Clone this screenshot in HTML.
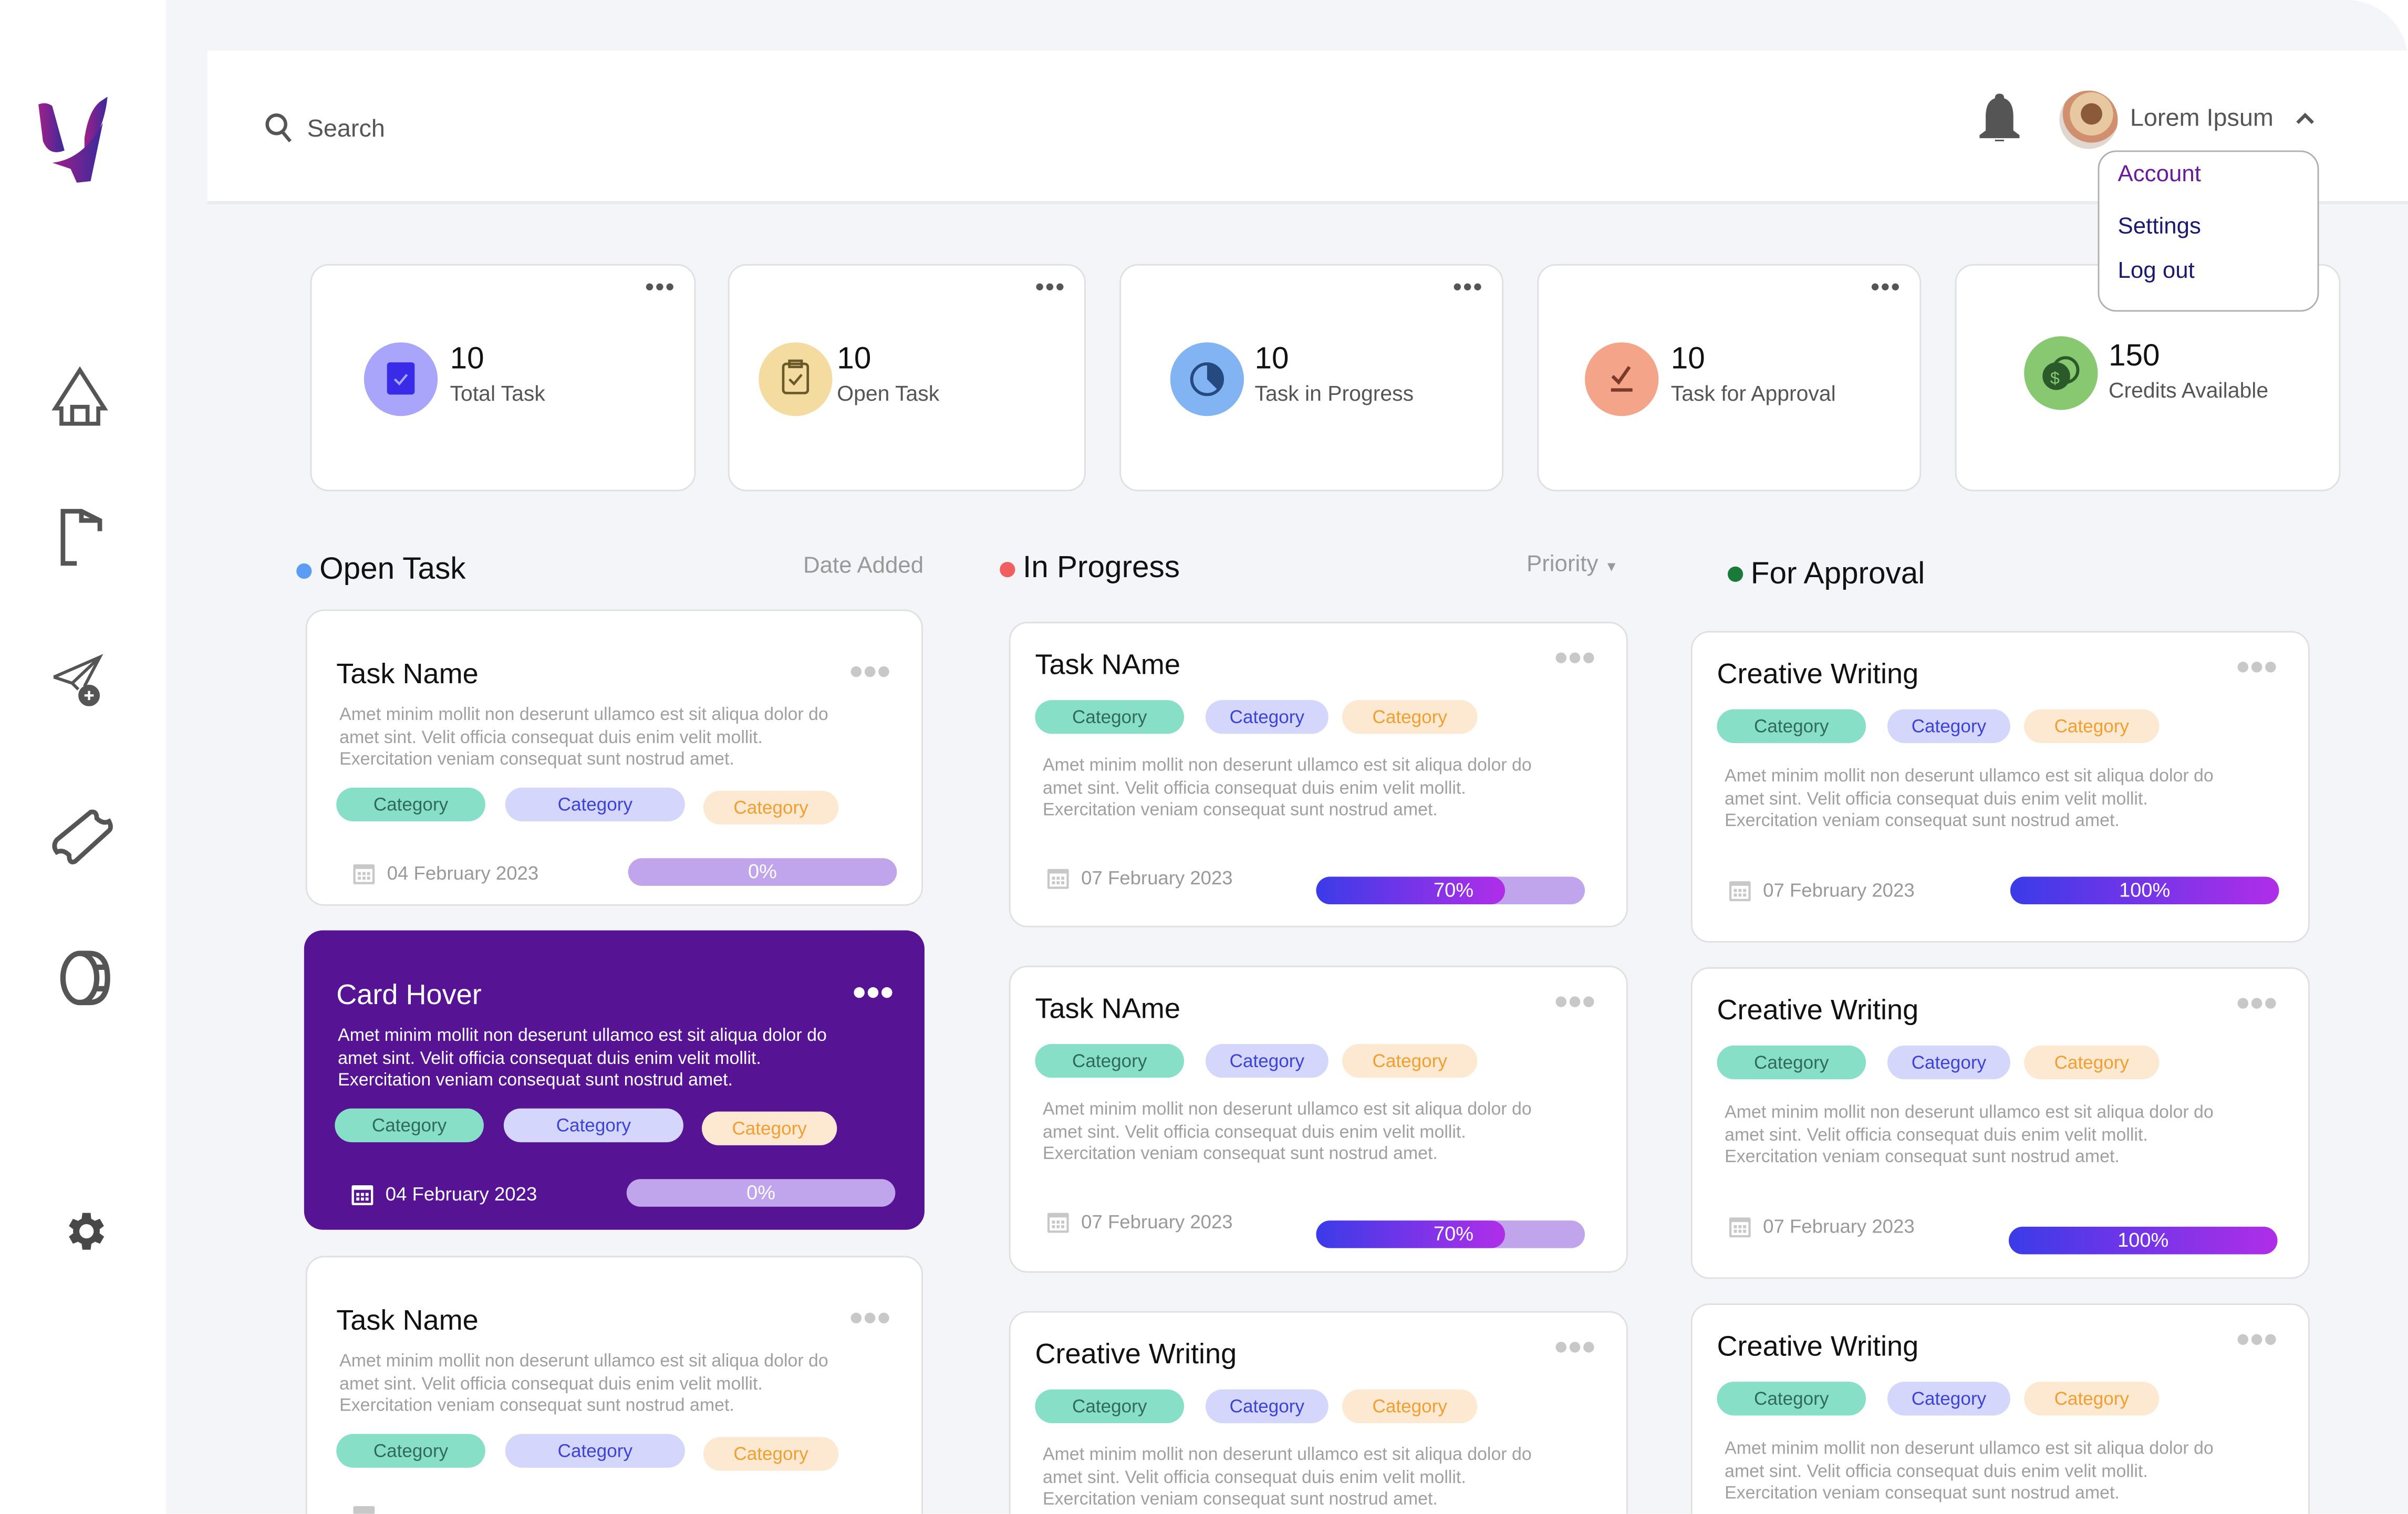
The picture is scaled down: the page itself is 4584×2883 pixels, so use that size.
<!DOCTYPE html>
<html><head><meta charset="utf-8"><style>
html,body{margin:0;padding:0;width:4584px;height:2883px;overflow:hidden;background:#fff;font-family:"Liberation Sans",sans-serif}
#s{position:absolute;left:0;top:0;width:1568px;height:986px;overflow:hidden;transform:scale(2.9235);transform-origin:0 0}
.a{position:absolute}
.main{left:108px;top:0;width:1460px;height:986px;background:#f4f5f9;border-top-right-radius:40px}
.card{position:absolute;background:#fff;border:1px solid #e0e0e0;border-radius:12px;box-sizing:border-box}
.stat .dots{position:absolute;right:12px;top:6px;color:#555;font-size:16px;letter-spacing:1px;font-weight:bold}
.stat .ic{position:absolute;left:34px;top:50px;width:48px;height:48px;border-radius:50%}
.stat .n{position:absolute;left:90px;top:50px;font-size:20px;color:#111}
.stat .l{position:absolute;left:90px;top:75px;font-size:14px;color:#555}
.t{position:absolute;font-size:18.5px;color:#111}
.d{position:absolute;font-size:11.6px;line-height:14.5px;color:#a0a0a0;white-space:nowrap}
.dt{position:absolute;font-size:12.5px;color:#999}
.tag{position:absolute;height:22px;border-radius:11px;font-size:12px;line-height:22px;text-align:center}
.g{background:#88dfc8;color:#2f6b58}.b{background:#d4d6fb;color:#3c43d6}.o{background:#fde8d2;color:#f0a030}
.bar{position:absolute;height:18px;border-radius:9px;background:#c0a4ec;overflow:hidden;color:#fff;font-size:13px;line-height:18px}
.fill{position:absolute;left:0;top:0;bottom:0;border-radius:9px;background:linear-gradient(90deg,#3b3be8,#b02ee8)}
.mdots{position:absolute;right:16px;top:22px;width:30px;height:8px;white-space:nowrap}
.mdots i{display:inline-block;width:7px;height:7px;border-radius:50%;background:#c8c8c8;margin-right:2px;vertical-align:top}
.cal{position:absolute;width:14px;height:15px}
.sh{position:absolute;font-size:20px;color:#111}
.dot{position:absolute;width:10px;height:10px;border-radius:50%}
</style></head><body><div id="s">
<div class="a main"></div>
<svg class="a" style="left:22px;top:62px" width="56" height="60" viewBox="0 0 56 60"><defs><linearGradient id="lg" x1="0" x2="1"><stop offset="0" stop-color="#a0208a"/><stop offset="1" stop-color="#3a2a9a"/></linearGradient></defs>
<path d="M3 6 Q8 4 12 7 L20 36 Q10 40 6 30 Z" fill="url(#lg)"/><path d="M33 28 Q36 8 45 3 L48 1 Q46 22 33 40 Z" fill="url(#lg)"/><path d="M12 44 Q32 42 45 18 L37 56 L28 57 L24 48 Z" fill="url(#lg)"/></svg>
<svg class="a" style="left:33px;top:238px" width="38" height="40" viewBox="0 0 38 40" fill="none" stroke="#555" stroke-width="2.6"><path d="M19 3 L3 28 L7 28 L7 38 L31 38 L31 28 L35 28 Z"/><path d="M14 38 V27 H24 V38"/></svg>
<svg class="a" style="left:38px;top:330px" width="30" height="40" viewBox="0 0 30 40" fill="none" stroke="#555" stroke-width="3"><path d="M12 37 H3 V3 H15 L27 9 V16"/><path d="M15 3 V9 H27"/></svg>
<svg class="a" style="left:33px;top:425px" width="36" height="36" viewBox="0 0 36 36" fill="none" stroke="#555" stroke-width="2"><path d="M2 16 L32 3 L22 22"/><path d="M2 16 L14 20 L32 3 M14 20 L18 24"/><circle cx="25" cy="28" r="6" fill="#555"/><path d="M25 25 V31 M22 28 H28" stroke="#fff" stroke-width="1.5"/></svg>
<svg class="a" style="left:33px;top:525px" width="42" height="40" viewBox="0 0 42 40" fill="none" stroke="#555" stroke-width="3"><path d="M4 22 L26 4 Q30 3 30 8 Q34 12 38 10 Q40 14 38 16 L16 36 Q12 38 12 32 Q8 28 4 30 Q1 26 4 22 Z"/></svg>
<svg class="a" style="left:38px;top:618px" width="36" height="38" viewBox="0 0 36 38" fill="none" stroke="#555" stroke-width="3.5"><ellipse cx="14" cy="19" rx="11" ry="16"/><path d="M14 3 H20 Q32 3 32 19 Q32 35 20 35 H14"/><path d="M24 12 H31 M24 26 H31"/></svg>
<svg class="a" style="left:39px;top:786px" width="32" height="32" viewBox="0 0 24 24" fill="#484848"><path d="M19.4 13a7.5 7.5 0 000-2l2.1-1.6-2-3.5-2.5 1a7 7 0 00-1.7-1L15 3h-4l-.4 2.9a7 7 0 00-1.7 1l-2.5-1-2 3.5L6.5 11a7.5 7.5 0 000 2l-2.1 1.6 2 3.5 2.5-1a7 7 0 001.7 1L11 21h4l.4-2.9a7 7 0 001.7-1l2.5 1 2-3.5zM13 15.5A3.5 3.5 0 1113 8.5a3.5 3.5 0 010 7z"/></svg>
<div class="a" style="left:135px;top:33px;width:1433px;height:98px;background:#fff;border-bottom:2px solid #ebebeb"></div>
<svg class="a" style="left:172px;top:73px" width="20" height="22" viewBox="0 0 20 22" fill="none" stroke="#555" stroke-width="2.2"><circle cx="8" cy="8" r="6"/><path d="M12 13 L17 19"/></svg>
<div class="a" style="left:200px;top:76px;font-size:16px;color:#555">Search</div>
<svg class="a" style="left:1288px;top:60px" width="28" height="32" viewBox="0 0 28 32" fill="#555"><path d="M14 1 Q17 1 17 4 Q23 6 23 16 V25 L27 28 V30 H1 V28 L5 25 V16 Q5 6 11 4 Q11 1 14 1Z"/><path d="M11 31 H17 Q17 34 14 34 Q11 34 11 31Z"/></svg>
<div class="a" style="left:1341px;top:59px;width:38px;height:38px;border-radius:50%;background:radial-gradient(circle at 55% 40%,#8a5a3a 0 22%,#e8c8a0 23% 45%,#d09070 46% 60%,#e0d8d0 61%)"></div>
<div class="a" style="left:1387px;top:69px;font-size:16px;color:#555">Lorem Ipsum</div>
<svg class="a" style="left:1494px;top:71px" width="14" height="12" viewBox="0 0 14 12" fill="none" stroke="#555" stroke-width="2.2"><path d="M2 9 L7 4 L12 9"/></svg>
<div class="card stat" style="left:202px;top:172px;width:251px;height:148px"><div class="dots">•••</div><div class="ic" style="background:#a9a5fb"><div class="a" style="left:15px;top:13px;width:18px;height:21px;background:#3a2be8;border-radius:2px"></div><svg class="a" style="left:19px;top:20px" width="10" height="8"><path d="M1 4 L4 7 L9 1" stroke="#a9a5fb" fill="none" stroke-width="1.5"/></svg></div><div class="n">10</div><div class="l">Total Task</div></div>
<div class="card stat" style="left:474px;top:172px;width:233px;height:148px"><div class="dots">•••</div><div class="ic" style="left:19px;background:#f4dca0"><svg class="a" style="left:14px;top:11px" width="20" height="24" viewBox="0 0 20 24" fill="none" stroke="#6a5a2a" stroke-width="1.6"><rect x="2" y="3" width="16" height="19" rx="2"/><rect x="6" y="1" width="8" height="4"/><path d="M6 13 L9 16 L14 10"/></svg></div><div class="n" style="left:70px">10</div><div class="l" style="left:70px">Open Task</div></div>
<div class="card stat" style="left:729px;top:172px;width:250px;height:148px"><div class="dots">•••</div><div class="ic" style="left:32px;background:#82b4f4"><svg class="a" style="left:12px;top:12px" width="24" height="24" viewBox="0 0 24 24"><circle cx="12" cy="12" r="10" fill="none" stroke="#244a80" stroke-width="2"/><path d="M12 2 A10 10 0 0 1 19 19 L12 12Z" fill="#244a80"/></svg></div><div class="n" style="left:87px">10</div><div class="l" style="left:87px">Task in Progress</div></div>
<div class="card stat" style="left:1001px;top:172px;width:250px;height:148px"><div class="dots">•••</div><div class="ic" style="left:30px;background:#f4a488"><svg class="a" style="left:15px;top:14px" width="18" height="20" viewBox="0 0 18 20" fill="none" stroke="#7a3a2a" stroke-width="2.2"><path d="M3 8 L7 12 L14 2"/><path d="M2 17 H16"/></svg></div><div class="n" style="left:86px">10</div><div class="l" style="left:86px">Task for Approval</div></div>
<div class="card stat" style="left:1273px;top:172px;width:251px;height:148px"><div class="dots">•••</div><div class="ic" style="left:44px;top:46px;background:#88c870"><svg class="a" style="left:10px;top:12px" width="28" height="24" viewBox="0 0 28 24" fill="none" stroke="#2a5a2a" stroke-width="2"><circle cx="11" cy="14" r="8" fill="#2a5a2a"/><circle cx="17" cy="10" r="8"/><text x="7" y="19" font-size="11" fill="#88c870" stroke="none" font-family="Liberation Sans">$</text></svg></div><div class="n" style="left:99px;top:48px">150</div><div class="l" style="left:99px;top:73px">Credits Available</div></div>
<div class="a" style="left:1366px;top:98px;width:144px;height:105px;background:#fff;border:1.5px solid #b0b0b0;border-radius:12px;box-sizing:border-box"></div>
<div class="a" style="left:1379px;top:105px;font-size:15px;color:#6a1b9a">Account</div>
<div class="a" style="left:1379px;top:139px;font-size:15px;color:#1a1a6e">Settings</div>
<div class="a" style="left:1379px;top:168px;font-size:15px;color:#1a1a6e">Log out</div>
<div class="dot" style="left:193px;top:367px;background:#5b9cf5"></div><div class="sh" style="left:208px;top:360px">Open Task</div>
<div class="a" style="left:523px;top:360px;font-size:15px;color:#999">Date Added</div>
<div class="dot" style="left:651px;top:366px;background:#f06060"></div><div class="sh" style="left:666px;top:359px">In Progress</div>
<div class="a" style="left:994px;top:359px;font-size:15px;color:#999">Priority <span style="font-size:9px">▼</span></div>
<div class="dot" style="left:1125px;top:369px;background:#1a7a3a"></div><div class="sh" style="left:1140px;top:363px">For Approval</div>

<div class="card" style="left:199px;top:397px;width:402px;height:193px">
<div class="t" style="left:19px;top:30px">Task Name</div><div class="mdots" style="top:36px"><i></i><i></i><i></i></div>
<div class="d" style="left:21px;top:61px">Amet minim mollit non deserunt ullamco est sit aliqua dolor do<br>amet sint. Velit officia consequat duis enim velit mollit.<br>Exercitation veniam consequat sunt nostrud amet.</div>
<div class="tag g" style="left:19px;top:115px;width:97px">Category</div><div class="tag b" style="left:129px;top:115px;width:117px">Category</div><div class="tag o" style="left:258px;top:117px;width:88px">Category</div>
<svg class="cal" style="left:30px;top:163px" viewBox="0 0 14 15"><rect x="0" y="2" width="14" height="13" rx="1" fill="#c8c8c8"/><rect x="1.5" y="5" width="11" height="8.5" fill="#fff"/><g fill="#c8c8c8"><rect x="3" y="7" width="2" height="2"/><rect x="6" y="7" width="2" height="2"/><rect x="9" y="7" width="2" height="2"/><rect x="3" y="10" width="2" height="2"/><rect x="6" y="10" width="2" height="2"/><rect x="9" y="10" width="2" height="2"/></g></svg>
<div class="dt" style="left:52px;top:164px">04 February 2023</div>
<div class="bar" style="left:209px;top:161px;width:175px"><div class="a" style="left:0;right:0;text-align:center">0%</div></div></div>

<div class="card" style="left:198px;top:606px;width:404px;height:195px;background:#561494;border:none">
<div class="t" style="left:21px;top:31px;color:#fff">Card Hover</div><div class="mdots" style="top:37px"><i style="background:#fff"></i><i style="background:#fff"></i><i style="background:#fff"></i></div>
<div class="d" style="left:22px;top:62px;color:#fff">Amet minim mollit non deserunt ullamco est sit aliqua dolor do<br>amet sint. Velit officia consequat duis enim velit mollit.<br>Exercitation veniam consequat sunt nostrud amet.</div>
<div class="tag g" style="left:20px;top:116px;width:97px">Category</div><div class="tag b" style="left:130px;top:116px;width:117px">Category</div><div class="tag o" style="left:259px;top:118px;width:88px">Category</div>
<svg class="cal" style="left:31px;top:164px" viewBox="0 0 14 15"><rect x="0" y="2" width="14" height="13" rx="1" fill="#fff"/><rect x="1.5" y="5" width="11" height="8.5" fill="#561494"/><g fill="#fff"><rect x="3" y="7" width="2" height="2"/><rect x="6" y="7" width="2" height="2"/><rect x="9" y="7" width="2" height="2"/><rect x="3" y="10" width="2" height="2"/><rect x="6" y="10" width="2" height="2"/><rect x="9" y="10" width="2" height="2"/></g></svg>
<div class="dt" style="left:53px;top:165px;color:#fff">04 February 2023</div>
<div class="bar" style="left:210px;top:162px;width:175px"><div class="a" style="left:0;right:0;text-align:center">0%</div></div></div>

<div class="card" style="left:199px;top:818px;width:402px;height:200px">
<div class="t" style="left:19px;top:30px">Task Name</div><div class="mdots" style="top:36px"><i></i><i></i><i></i></div>
<div class="d" style="left:21px;top:61px">Amet minim mollit non deserunt ullamco est sit aliqua dolor do<br>amet sint. Velit officia consequat duis enim velit mollit.<br>Exercitation veniam consequat sunt nostrud amet.</div>
<div class="tag g" style="left:19px;top:115px;width:97px">Category</div><div class="tag b" style="left:129px;top:115px;width:117px">Category</div><div class="tag o" style="left:258px;top:117px;width:88px">Category</div>
<svg class="cal" style="left:30px;top:160px" viewBox="0 0 14 15"><rect x="0" y="2" width="14" height="13" rx="1" fill="#c8c8c8"/></svg></div>

<div class="card" style="left:657px;top:405px;width:403px;height:199px">
<div class="t" style="left:16px;top:16px">Task NAme</div><div class="mdots" style="top:19px"><i></i><i></i><i></i></div>
<div class="tag g" style="left:16px;top:50px;width:97px">Category</div><div class="tag b" style="left:127px;top:50px;width:80px">Category</div><div class="tag o" style="left:216px;top:50px;width:88px">Category</div>
<div class="d" style="left:21px;top:86px">Amet minim mollit non deserunt ullamco est sit aliqua dolor do<br>amet sint. Velit officia consequat duis enim velit mollit.<br>Exercitation veniam consequat sunt nostrud amet.</div>
<svg class="cal" style="left:24px;top:158px" viewBox="0 0 14 15"><rect x="0" y="2" width="14" height="13" rx="1" fill="#c8c8c8"/><rect x="1.5" y="5" width="11" height="8.5" fill="#fff"/><g fill="#c8c8c8"><rect x="3" y="7" width="2" height="2"/><rect x="6" y="7" width="2" height="2"/><rect x="9" y="7" width="2" height="2"/><rect x="3" y="10" width="2" height="2"/><rect x="6" y="10" width="2" height="2"/><rect x="9" y="10" width="2" height="2"/></g></svg>
<div class="dt" style="left:46px;top:159px">07 February 2023</div>
<div class="bar" style="left:199px;top:165px;width:175px"><div class="fill" style="width:70%"></div><div class="a" style="left:0;width:70%;text-align:right"><span style="position:relative;right:20px">70%</span></div></div></div>

<div class="card" style="left:657px;top:629px;width:403px;height:200px">
<div class="t" style="left:16px;top:16px">Task NAme</div><div class="mdots" style="top:19px"><i></i><i></i><i></i></div>
<div class="tag g" style="left:16px;top:50px;width:97px">Category</div><div class="tag b" style="left:127px;top:50px;width:80px">Category</div><div class="tag o" style="left:216px;top:50px;width:88px">Category</div>
<div class="d" style="left:21px;top:86px">Amet minim mollit non deserunt ullamco est sit aliqua dolor do<br>amet sint. Velit officia consequat duis enim velit mollit.<br>Exercitation veniam consequat sunt nostrud amet.</div>
<svg class="cal" style="left:24px;top:158px" viewBox="0 0 14 15"><rect x="0" y="2" width="14" height="13" rx="1" fill="#c8c8c8"/><rect x="1.5" y="5" width="11" height="8.5" fill="#fff"/><g fill="#c8c8c8"><rect x="3" y="7" width="2" height="2"/><rect x="6" y="7" width="2" height="2"/><rect x="9" y="7" width="2" height="2"/><rect x="3" y="10" width="2" height="2"/><rect x="6" y="10" width="2" height="2"/><rect x="9" y="10" width="2" height="2"/></g></svg>
<div class="dt" style="left:46px;top:159px">07 February 2023</div>
<div class="bar" style="left:199px;top:165px;width:175px"><div class="fill" style="width:70%"></div><div class="a" style="left:0;width:70%;text-align:right"><span style="position:relative;right:20px">70%</span></div></div></div>

<div class="card" style="left:657px;top:854px;width:403px;height:160px">
<div class="t" style="left:16px;top:16px">Creative Writing</div><div class="mdots" style="top:19px"><i></i><i></i><i></i></div>
<div class="tag g" style="left:16px;top:50px;width:97px">Category</div><div class="tag b" style="left:127px;top:50px;width:80px">Category</div><div class="tag o" style="left:216px;top:50px;width:88px">Category</div>
<div class="d" style="left:21px;top:86px">Amet minim mollit non deserunt ullamco est sit aliqua dolor do<br>amet sint. Velit officia consequat duis enim velit mollit.<br>Exercitation veniam consequat sunt nostrud amet.</div></div>

<div class="card" style="left:1101px;top:411px;width:403px;height:203px">
<div class="t" style="left:16px;top:16px">Creative Writing</div><div class="mdots" style="top:19px"><i></i><i></i><i></i></div>
<div class="tag g" style="left:16px;top:50px;width:97px">Category</div><div class="tag b" style="left:127px;top:50px;width:80px">Category</div><div class="tag o" style="left:216px;top:50px;width:88px">Category</div>
<div class="d" style="left:21px;top:87px">Amet minim mollit non deserunt ullamco est sit aliqua dolor do<br>amet sint. Velit officia consequat duis enim velit mollit.<br>Exercitation veniam consequat sunt nostrud amet.</div>
<svg class="cal" style="left:24px;top:160px" viewBox="0 0 14 15"><rect x="0" y="2" width="14" height="13" rx="1" fill="#c8c8c8"/><rect x="1.5" y="5" width="11" height="8.5" fill="#fff"/><g fill="#c8c8c8"><rect x="3" y="7" width="2" height="2"/><rect x="6" y="7" width="2" height="2"/><rect x="9" y="7" width="2" height="2"/><rect x="3" y="10" width="2" height="2"/><rect x="6" y="10" width="2" height="2"/><rect x="9" y="10" width="2" height="2"/></g></svg>
<div class="dt" style="left:46px;top:161px">07 February 2023</div>
<div class="bar" style="left:207px;top:159px;width:175px"><div class="fill" style="width:100%"></div><div class="a" style="left:0;right:0;text-align:center">100%</div></div></div>

<div class="card" style="left:1101px;top:630px;width:403px;height:203px">
<div class="t" style="left:16px;top:16px">Creative Writing</div><div class="mdots" style="top:19px"><i></i><i></i><i></i></div>
<div class="tag g" style="left:16px;top:50px;width:97px">Category</div><div class="tag b" style="left:127px;top:50px;width:80px">Category</div><div class="tag o" style="left:216px;top:50px;width:88px">Category</div>
<div class="d" style="left:21px;top:87px">Amet minim mollit non deserunt ullamco est sit aliqua dolor do<br>amet sint. Velit officia consequat duis enim velit mollit.<br>Exercitation veniam consequat sunt nostrud amet.</div>
<svg class="cal" style="left:24px;top:160px" viewBox="0 0 14 15"><rect x="0" y="2" width="14" height="13" rx="1" fill="#c8c8c8"/><rect x="1.5" y="5" width="11" height="8.5" fill="#fff"/><g fill="#c8c8c8"><rect x="3" y="7" width="2" height="2"/><rect x="6" y="7" width="2" height="2"/><rect x="9" y="7" width="2" height="2"/><rect x="3" y="10" width="2" height="2"/><rect x="6" y="10" width="2" height="2"/><rect x="9" y="10" width="2" height="2"/></g></svg>
<div class="dt" style="left:46px;top:161px">07 February 2023</div>
<div class="bar" style="left:206px;top:168px;width:175px"><div class="fill" style="width:100%"></div><div class="a" style="left:0;right:0;text-align:center">100%</div></div></div>

<div class="card" style="left:1101px;top:849px;width:403px;height:160px">
<div class="t" style="left:16px;top:16px">Creative Writing</div><div class="mdots" style="top:19px"><i></i><i></i><i></i></div>
<div class="tag g" style="left:16px;top:50px;width:97px">Category</div><div class="tag b" style="left:127px;top:50px;width:80px">Category</div><div class="tag o" style="left:216px;top:50px;width:88px">Category</div>
<div class="d" style="left:21px;top:87px">Amet minim mollit non deserunt ullamco est sit aliqua dolor do<br>amet sint. Velit officia consequat duis enim velit mollit.<br>Exercitation veniam consequat sunt nostrud amet.</div></div>
</div></body></html>
